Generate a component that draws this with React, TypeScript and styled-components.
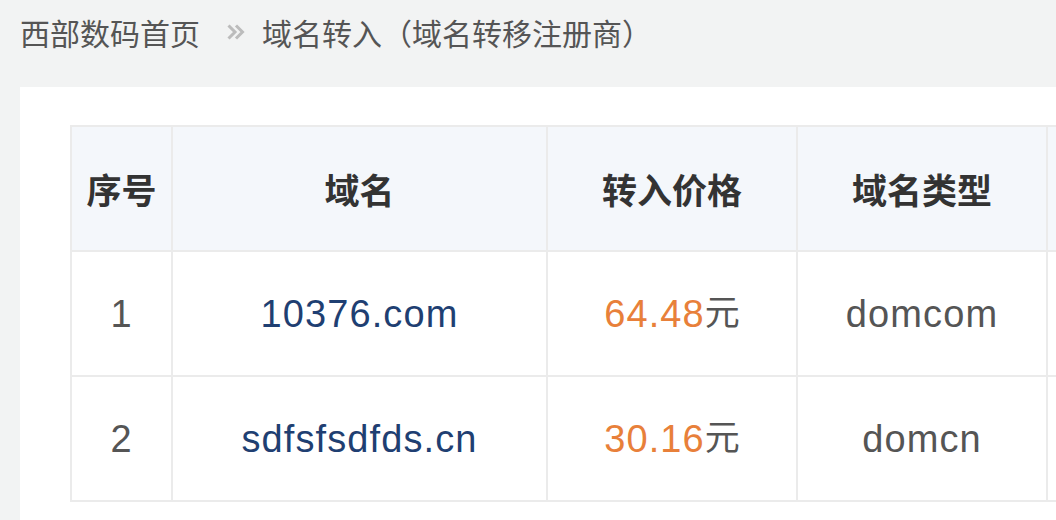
import React from "react";
import styled, { createGlobalStyle } from "styled-components";

const GlobalStyle = createGlobalStyle`
  * { box-sizing: border-box; }
  html, body { margin: 0; padding: 0; }
  body {
    background: #f2f3f3;
    font-family: "Liberation Sans", "Noto Sans CJK SC", sans-serif;
    overflow: hidden;
    width: 1056px;
    height: 520px;
  }
`;

const Page = styled.div`
  width: 1056px;
  height: 520px;
  overflow: hidden;
  display: flex;
  flex-direction: column;
`;

const Breadcrumb = styled.nav`
  height: 64px;
  padding-left: 20px;
  display: flex;
  align-items: center;
  font-family: "Noto Sans CJK SC", sans-serif;
  font-size: 30px;
  color: #555;
  flex-shrink: 0;
`;

const Crumb = styled.span`
  white-space: nowrap;
`;

const Sep = styled.span`
  display: inline-flex;
  align-items: center;
  margin: 0 17px 0 27px;
`;

const Card = styled.section`
  margin: 23px 0 0 20px;
  background: #fff;
  flex: 1;
  padding: 38px 0 0 50px;
  overflow: hidden;
`;

const Table = styled.table`
  border-collapse: separate;
  border-spacing: 0;
  table-layout: fixed;
  width: 1228px;
  border-top: 2px solid #ebebeb;
  border-left: 2px solid #ebebeb;
`;

const Th = styled.th<{ $w: number }>`
  width: ${(p) => p.$w}px;
  height: 125px;
  background: #f4f7fb;
  border-right: 2px solid #ebebeb;
  border-bottom: 2px solid #ebebeb;
  font-family: "Noto Sans CJK SC", sans-serif;
  font-weight: 700;
  font-size: 35px;
  color: #333;
  text-align: center;
  vertical-align: middle;
  padding: 0;
`;

const Td = styled.td<{ $tone?: "link" | "plain" }>`
  height: 125px;
  border-right: 2px solid #ebebeb;
  border-bottom: 2px solid #ebebeb;
  text-align: center;
  vertical-align: middle;
  font-size: 38px;
  line-height: 44px;
  letter-spacing: 1.1px;
  color: ${(p) => (p.$tone === "link" ? "#1f3f72" : "#555")};
  padding: 0;
  white-space: nowrap;
`;

const Price = styled.span`
  color: #e8803a;
`;

const Unit = styled.span`
  font-family: "Noto Sans CJK SC", sans-serif;
  font-size: 35px;
  line-height: 1;
  letter-spacing: 0;
  color: #555;
  position: relative;
  top: -2px;
`;

const rows = [
  { no: 1, domain: "10376.com", price: "64.48", type: "domcom" },
  { no: 2, domain: "sdfsfsdfds.cn", price: "30.16", type: "domcn" },
];

const DoubleChevron = () => (
  <svg width="18" height="18" viewBox="0 0 18 18" fill="none">
    <path d="M1.5 2.5 L8 9 L1.5 15.5" stroke="#bcbcbc" strokeWidth="3" />
    <path d="M9 2.5 L15.5 9 L9 15.5" stroke="#bcbcbc" strokeWidth="3" />
  </svg>
);

export default function App() {
  return (
    <Page>
      <GlobalStyle />
      <Breadcrumb>
        <Crumb>西部数码首页</Crumb>
        <Sep>
          <DoubleChevron />
        </Sep>
        <Crumb>域名转入（域名转移注册商）</Crumb>
      </Breadcrumb>
      <Card>
        <Table>
          <thead>
            <tr>
              <Th $w={101}>序号</Th>
              <Th $w={375}>域名</Th>
              <Th $w={250}>转入价格</Th>
              <Th $w={250}>域名类型</Th>
              <Th $w={250}></Th>
            </tr>
          </thead>
          <tbody>
            {rows.map((r) => (
              <tr key={r.no}>
                <Td>{r.no}</Td>
                <Td $tone="link">{r.domain}</Td>
                <Td>
                  <Price>{r.price}</Price>
                  <Unit>元</Unit>
                </Td>
                <Td>{r.type}</Td>
                <Td></Td>
              </tr>
            ))}
          </tbody>
        </Table>
      </Card>
    </Page>
  );
}
